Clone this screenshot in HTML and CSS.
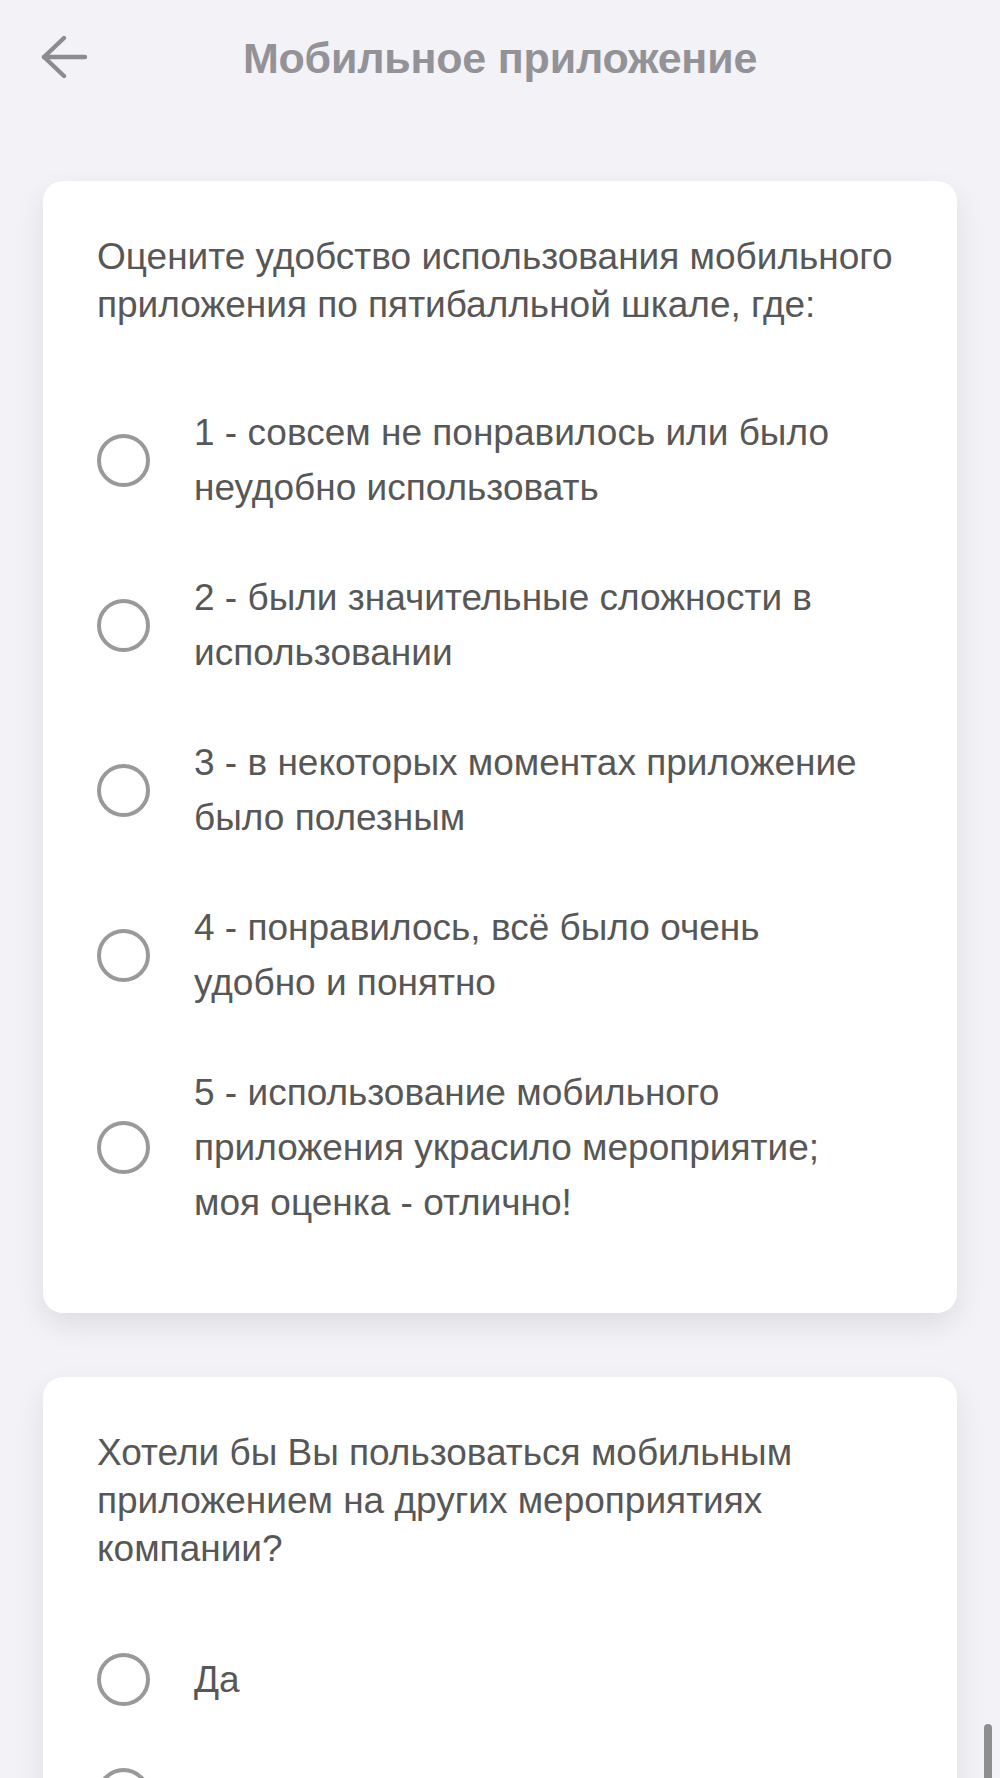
FILE: index.html
```html
<!DOCTYPE html>
<html lang="ru">
<head>
<meta charset="utf-8">
<title>Мобильное приложение</title>
<link rel="stylesheet" href="styles.css">
</head>
<body>
<header class="topbar">
  <button class="back" aria-label="Назад">
    <svg width="48" height="46" viewBox="0 0 48 46" fill="none" stroke="#8c8c90" stroke-width="4.4" stroke-linecap="round" stroke-linejoin="round">
      <path d="M45 22H4"/>
      <path d="M24 3L4 22L24 41"/>
    </svg>
  </button>
  <h1 class="title">Мобильное приложение</h1>
</header>
<main class="content">
  <section class="card">
    <p class="question">Оцените удобство использования мобильного приложения по пятибалльной шкале, где:</p>
    <ul class="options">
      <li class="option"><span class="radio"></span><span class="label">1 - совсем не понравилось или было неудобно использовать</span></li>
      <li class="option"><span class="radio"></span><span class="label">2 - были значительные сложности в использовании</span></li>
      <li class="option"><span class="radio"></span><span class="label">3 - в некоторых моментах приложение было полезным</span></li>
      <li class="option"><span class="radio"></span><span class="label">4 - понравилось, всё было очень удобно и понятно</span></li>
      <li class="option"><span class="radio"></span><span class="label">5 - использование мобильного приложения украсило мероприятие; моя оценка - отлично!</span></li>
    </ul>
  </section>
  <section class="card">
    <p class="question">Хотели бы Вы пользоваться мобильным приложением на других мероприятиях компании?</p>
    <ul class="options">
      <li class="option"><span class="radio"></span><span class="label">Да</span></li>
      <li class="option"><span class="radio"></span><span class="label">Нет</span></li>
    </ul>
  </section>
</main>
<div class="scroll-indicator"></div>
</body>
</html>
```
FILE: styles.css
```css
* { box-sizing: border-box; }
html, body { margin: 0; padding: 0; }
body {
  background: #f2f2f7;
  font-family: "Liberation Sans", Arial, Helvetica, sans-serif;
  color: #575757;
  height: 1778px;
  overflow: hidden;
}
.topbar {
  position: relative;
  height: 116px;
  display: flex;
  align-items: center;
  justify-content: center;
}
.back {
  position: absolute;
  left: 40px;
  top: 35px;
  background: none;
  border: 0;
  padding: 0;
  width: 48px;
  height: 46px;
  display: flex;
}
.title {
  margin: 0;
  font-size: 43px;
  font-weight: 700;
  color: #929297;
  line-height: 1;
  letter-spacing: -0.2px;
}
.content {
  padding: 65px 43px 0;
  display: flex;
  flex-direction: column;
  gap: 64px;
}
.card {
  background: #fff;
  border-radius: 20px;
  padding: 52px 54px 83px;
  box-shadow: 0 12px 30px rgba(0, 0, 0, 0.09);
}
.question {
  margin: 0;
  font-size: 37px;
  line-height: 48px;
}
.options {
  list-style: none;
  margin: 76px 0 0;
  padding: 0;
  display: flex;
  flex-direction: column;
  gap: 55px;
}
.option {
  display: flex;
  align-items: center;
  gap: 44px;
  min-height: 60px;
}
.radio {
  flex: 0 0 53px;
  width: 53px;
  height: 53px;
  border: 4px solid #999;
  border-radius: 50%;
}
.label {
  flex: 0 1 680px;
  font-size: 37px;
  line-height: 55px;
}
.scroll-indicator {
  position: fixed;
  right: 8px;
  bottom: 0;
  width: 8px;
  height: 54px;
  background: #8e8e8e;
  border-radius: 4px 4px 0 0;
}
```
